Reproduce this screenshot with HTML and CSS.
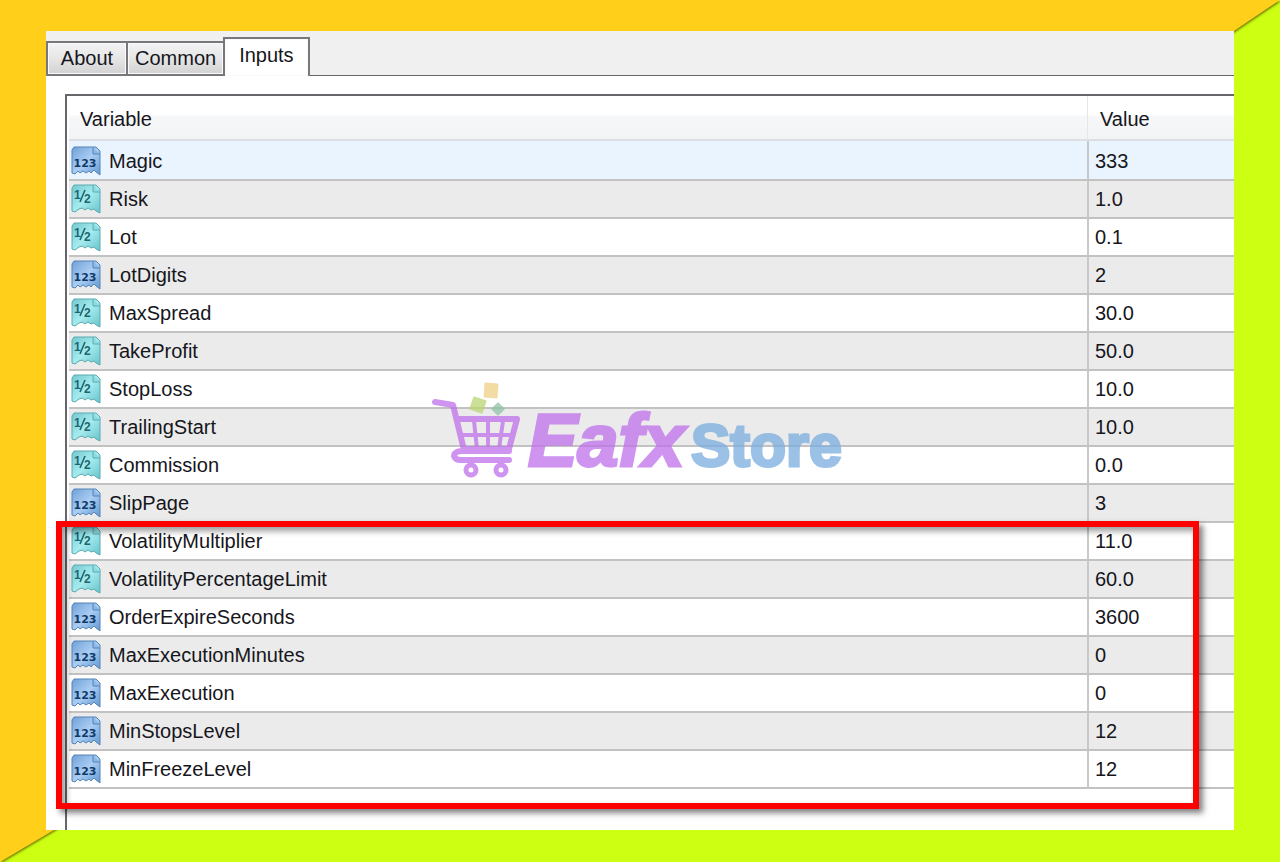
FILE: index.html
```html
<!DOCTYPE html>
<html lang="en">

<head>
    <meta charset="UTF-8">
    <meta name="viewport" content="width=device-width, initial-scale=1.0">
    <title>Inputs</title>
    <link rel="stylesheet" href="styles.css">
</head>

<body>
    <!-- shared icons -->
    <svg class="defs" aria-hidden="true">
        <defs>
            <linearGradient id="blue" x1="0" y1="0" x2="1" y2="1">
                <stop offset="0" stop-color="#6fa0d8" />
                <stop offset="0.5" stop-color="#a9cdf3" />
                <stop offset="1" stop-color="#6499d2" />
            </linearGradient>
            <linearGradient id="teal" x1="0" y1="0" x2="1" y2="1">
                <stop offset="0" stop-color="#74c9cf" />
                <stop offset="0.5" stop-color="#a5ebee" />
                <stop offset="1" stop-color="#66c3ca" />
            </linearGradient>
            <symbol id="int" viewBox="0 0 30 30">
                <path d="M3 1H25L29 5V29L25 26L23 24L20 27L18 25L15 27L12 25L9 27L7 25L4 28L1 27V4Z" fill="url(#blue)" stroke="#5583b8" />
                <path d="M22 1V8H29" fill="#8fb9e6" stroke="#5583b8" />
                <text class="icon-int" x="14" y="21" text-anchor="middle">123</text>
            </symbol>
            <symbol id="double" viewBox="0 0 30 30">
                <path d="M3 1H25L29 5V29L25 27L23 25L20 26L17 24L14 26L11 24L8 25L4 28L1 27V4Z" fill="url(#teal)" stroke="#5aaab2" />
                <path d="M22 1V8H29" fill="#8edce0" stroke="#5aaab2" />
                <text class="icon-double" x="3" y="15">1</text>
                <path d="M9 18L14 6" stroke="#1f6674" stroke-width="1.6" />
                <text class="icon-double" x="13" y="19">2</text>
            </symbol>
        </defs>
    </svg>

    <div class="backdrop"></div>

    <main class="window">
        <div class="tabs" role="tablist">
            <button type="button" role="tab" class="tab">About</button>
            <button type="button" role="tab" class="tab">Common</button>
            <button type="button" role="tab" class="tab active" aria-selected="true">Inputs</button>
        </div>

        <div class="list">
            <table>
                <thead>
                    <tr>
                        <th>Variable</th>
                        <th class="value">Value</th>
                    </tr>
                </thead>
                <tbody>
                    <tr class="selected"><td><svg><use href="#int" /></svg>Magic</td><td>333</td></tr>
                    <tr><td><svg><use href="#double" /></svg>Risk</td><td>1.0</td></tr>
                    <tr><td><svg><use href="#double" /></svg>Lot</td><td>0.1</td></tr>
                    <tr><td><svg><use href="#int" /></svg>LotDigits</td><td>2</td></tr>
                    <tr><td><svg><use href="#double" /></svg>MaxSpread</td><td>30.0</td></tr>
                    <tr><td><svg><use href="#double" /></svg>TakeProfit</td><td>50.0</td></tr>
                    <tr><td><svg><use href="#double" /></svg>StopLoss</td><td>10.0</td></tr>
                    <tr><td><svg><use href="#double" /></svg>TrailingStart</td><td>10.0</td></tr>
                    <tr><td><svg><use href="#double" /></svg>Commission</td><td>0.0</td></tr>
                    <tr><td><svg><use href="#int" /></svg>SlipPage</td><td>3</td></tr>
                    <tr><td><svg><use href="#double" /></svg>VolatilityMultiplier</td><td>11.0</td></tr>
                    <tr><td><svg><use href="#double" /></svg>VolatilityPercentageLimit</td><td>60.0</td></tr>
                    <tr><td><svg><use href="#int" /></svg>OrderExpireSeconds</td><td>3600</td></tr>
                    <tr><td><svg><use href="#int" /></svg>MaxExecutionMinutes</td><td>0</td></tr>
                    <tr><td><svg><use href="#int" /></svg>MaxExecution</td><td>0</td></tr>
                    <tr><td><svg><use href="#int" /></svg>MinStopsLevel</td><td>12</td></tr>
                    <tr><td><svg><use href="#int" /></svg>MinFreezeLevel</td><td>12</td></tr>
                </tbody>
            </table>

            <div class="highlight"></div>

            <svg class="watermark" viewBox="0 0 420 110" aria-label="EafxStore">
                <rect x="55" y="7" width="14" height="15" rx="1" fill="#f0cf86" transform="rotate(4 62 15)" />
                <rect x="42" y="22" width="14" height="14" rx="1" fill="#bad573" transform="rotate(18 49 29)" />
                <rect x="64" y="28" width="10" height="10" rx="1" fill="#8fc3a6" transform="rotate(45 69 33)" />
                <g fill="none" stroke="#bf6feb" stroke-linecap="round" stroke-linejoin="round">
                    <path d="M6 26L24 29L35 74M29 43H88L80 73H36M80 75H32Q25 76 25 80Q26 84 32 84H80" stroke-width="6" />
                    <path d="M31 59H83M45 45L48 73M59 45V73M74 45L70 73" stroke-width="4" />
                    <circle cx="42" cy="94" r="5" stroke-width="5" />
                    <circle cx="72" cy="94" r="5" stroke-width="5" />
                </g>
                <text class="brand" x="99" y="90">Eafx</text>
                <text class="store" x="262" y="90">Store</text>
            </svg>
        </div>
    </main>
</body>

</html>
```
FILE: styles.css
```css
* {
    box-sizing: border-box;
}

body {
    margin: 0;
    padding: 31px 46px 32px;
    min-height: 100vh;
    position: relative;
    background-color: #ccff12;
    font-family: "Liberation Sans", Arial, sans-serif;
    font-size: 20px;
    color: #16161c;
}

.defs {
    position: absolute;
    width: 0;
    height: 0;
}

/* yellow half of the frame, cut along the corners */
.backdrop {
    position: absolute;
    inset: 0;
    filter: drop-shadow(1px 1px 1px #6b7500);
}

.backdrop::before {
    content: "";
    display: block;
    height: 100%;
    background-color: #ffcf1a;
    clip-path: polygon(0 0, 100% 0, calc(100% - 46px) 31px, 54px calc(100% - 32px), 0 100%);
}

.window {
    position: relative;
    background-color: #fff;
    overflow: hidden;
}

.tabs {
    display: flex;
    align-items: flex-end;
    height: 45px;
    background-color: #f0f0f0;
    box-shadow: inset 0 -1px #66666b;
}

.tab {
    height: 35px;
    min-width: 80px;
    padding: 0 7px;
    font: inherit;
    color: inherit;
    border: 2px solid #77777c;
    border-right-width: 0;
    background: linear-gradient(#f3f3f3, #e6e6e6 50%, #d2d2d2);
    box-shadow: inset 0 0 0 1px #fafafa;
}

.tab.active {
    height: 39px;
    padding: 0 14px 4px;
    border-right-width: 2px;
    border-bottom: 0;
    background: #fff;
}

.list {
    position: relative;
    margin: 18px 0 0 19px;
    padding: 0 0 41px 2px;
    border-top: 2px solid #66666b;
    border-left: 2px solid #66666b;
}

table {
    width: 100%;
    table-layout: fixed;
    border-collapse: separate;
    border-spacing: 0;
}

th {
    height: 45px;
    padding: 4px 11px 0;
    font-weight: normal;
    text-align: left;
    background: linear-gradient(#fff 45%, #f6f7f8 46%, #f3f4f6);
    border-bottom: 2px solid #dcdee1;
}

th.value {
    width: 147px;
    padding-left: 12px;
    border-left: 1px solid #e4e6e9;
}

td {
    height: 38px;
    padding: 0 6px;
    border-bottom: 2px solid #c2c2c2;
}

td:first-child {
    padding: 0 2px;
}

td + td {
    border-left: 2px solid #c8c8c8;
}

tbody tr:nth-child(even) {
    background-color: #ebebeb;
}

tbody tr.selected {
    background-color: #eaf4fe;
}

tbody tr.selected td {
    height: 40px;
    padding-top: 2px;
}

td svg {
    width: 30px;
    height: 30px;
    margin-right: 8px;
    vertical-align: -8px;
}

.icon-int {
    font: bold 11px "DejaVu Sans", sans-serif;
    fill: #123a68;
}

.icon-double {
    font: bold 12px "Liberation Sans", sans-serif;
    fill: #1f6674;
}

.highlight {
    position: absolute;
    top: 425px;
    right: 35px;
    bottom: 21px;
    left: -11px;
    border: 6px solid #fe0000;
    box-shadow: 4px 4px 6px rgba(0, 0, 0, 0.5), inset 4px 4px 6px rgba(0, 0, 0, 0.4);
}

.watermark {
    position: absolute;
    top: 280px;
    left: 362px;
    width: 420px;
    height: 110px;
    opacity: 0.75;
}

.brand {
    font: italic bold 74px "Liberation Sans", sans-serif;
    fill: #bf6feb;
    stroke: #bf6feb;
    stroke-width: 3px;
}

.store {
    font: bold 59px "Liberation Sans", sans-serif;
    fill: #7aaede;
    stroke: #7aaede;
    stroke-width: 3px;
}
```
